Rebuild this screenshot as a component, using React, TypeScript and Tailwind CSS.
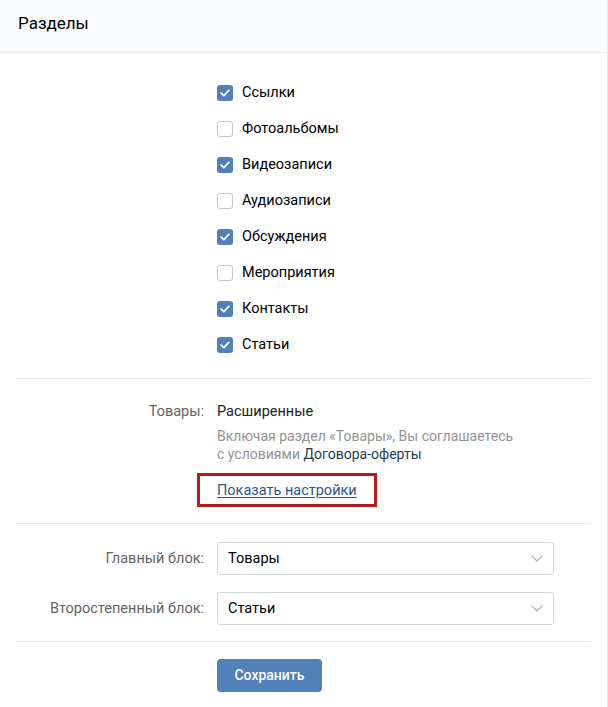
import React from "react";

const items: [string, boolean][] = [
  ["Ссылки", true],
  ["Фотоальбомы", false],
  ["Видеозаписи", true],
  ["Аудиозаписи", false],
  ["Обсуждения", true],
  ["Мероприятия", false],
  ["Контакты", true],
  ["Статьи", true],
];

function Check({ on }: { on: boolean }) {
  return on ? (
    <span className="w-4 h-4 rounded-[3px] bg-[#5181b8] flex items-center justify-center shrink-0">
      <svg width="10" height="8" viewBox="0 0 10 8" fill="none">
        <path d="M1.2 4.1 L3.8 6.6 L8.8 1.4" stroke="#fff" strokeWidth="1.8" strokeLinecap="round" strokeLinejoin="round" />
      </svg>
    </span>
  ) : (
    <span className="w-4 h-4 rounded-[3px] border border-[#c1c9d1] bg-white shrink-0" />
  );
}

function Chevron() {
  return (
    <svg width="12" height="7" viewBox="0 0 12 7" fill="none">
      <path d="M1 1 L6 6 L11 1" stroke="#a8b5c4" strokeWidth="1.3" strokeLinecap="round" strokeLinejoin="round" />
    </svg>
  );
}

function Select({ label, value }: { label: string; value: string }) {
  return (
    <div className="flex items-center">
      <div className="w-[188px] text-right text-[#656565] text-[14.5px]">{label}</div>
      <div className="ml-[13px] w-[337px] h-[33px] border border-[#d3d9de] rounded-[3px] flex items-center justify-between pl-[10px] pr-[10px] bg-white">
        <span className="text-[14.5px] text-black">{value}</span>
        <Chevron />
      </div>
    </div>
  );
}

export default function App() {
  return (
    <div
      className="w-[608px] min-h-[707px] bg-white border-r border-[#e7e8ec]"
      style={{ fontFamily: "Roboto, 'Liberation Sans', sans-serif" }}
    >
      <div className="h-[53px] bg-[#fafbfc] border-b border-[#e7e8ec] flex items-center pl-[18px] pb-[5px]">
        <span className="text-[17px] text-black">Разделы</span>
      </div>
      <div className="px-4">
        <div className="pt-[22px] pb-[15px] border-b border-[#e7e8ec]">
          {items.map(([t, on]) => (
            <div key={t} className="h-9 flex items-center pl-[201px] gap-[9px]">
              <Check on={on} />
              <span className="text-[14.5px] text-black">{t}</span>
            </div>
          ))}
        </div>
        <div className="pt-[23px] pb-[16px] border-b border-[#e7e8ec]">
          <div className="flex">
            <div className="w-[188px] text-right text-[14.5px] leading-5 text-[#656565]">Товары:</div>
            <div className="ml-[13px]">
              <div className="text-[14.5px] leading-5 text-[#222]">Расширенные</div>
              <div className="mt-[5px] text-[14px] leading-[18px] text-[#939393]">
                Включая раздел «Товары», Вы соглашаетесь
                <br />с условиями <span className="text-[#2a3a4b]">Договора-оферты</span>
              </div>
              <div className="mt-[10px] -ml-[20px] inline-block border-[3px] border-[#b51c1c] pl-[17px] pr-[17px] h-[34px] leading-[28px]">
                <span className="text-[14.5px] text-[#2a5885] underline underline-offset-2">Показать настройки</span>
              </div>
            </div>
          </div>
        </div>
        <div className="pt-[18px] pb-[16px] border-b border-[#e7e8ec] flex flex-col gap-[17px]">
          <Select label="Главный блок:" value="Товары" />
          <Select label="Второстепенный блок:" value="Статьи" />
        </div>
        <div className="pt-[17px] pl-[201px]">
          <button className="w-[105px] h-[33px] rounded-[4px] bg-[#5181b8] text-white text-[14px] font-medium">
            Сохранить
          </button>
        </div>
      </div>
    </div>
  );
}
